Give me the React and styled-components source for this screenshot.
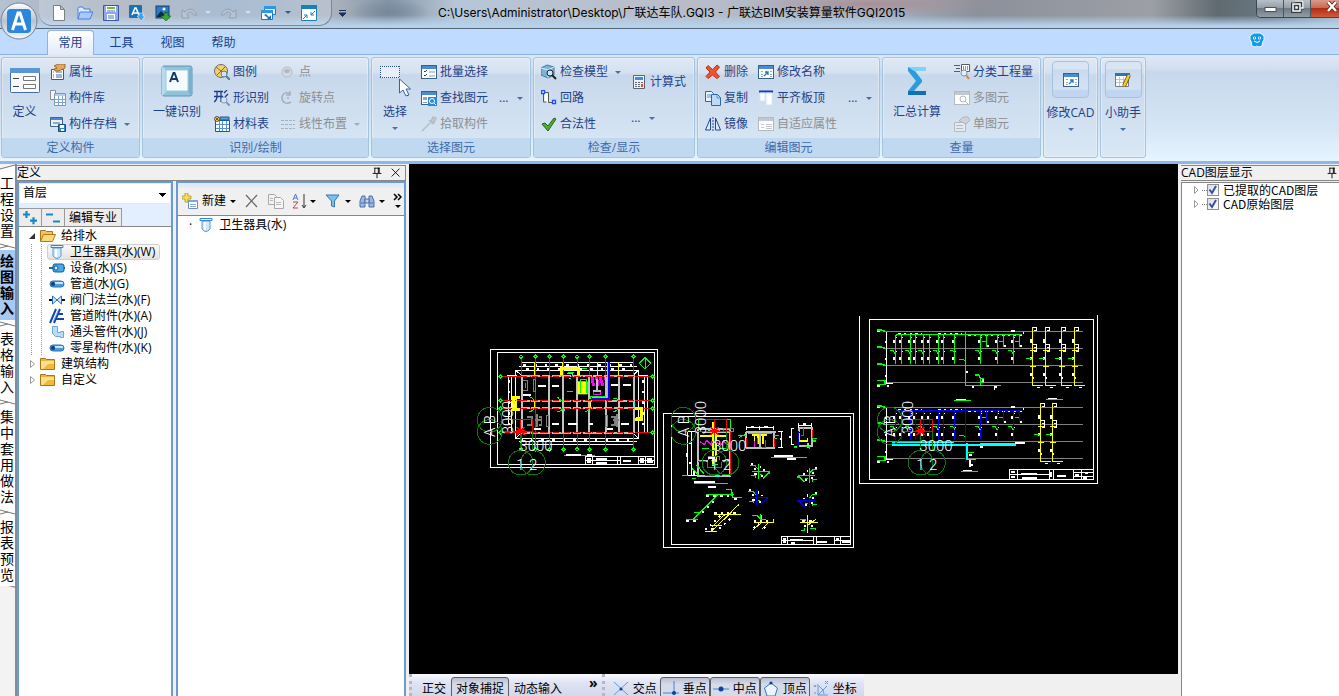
import React from "react";
import styled, { createGlobalStyle } from "styled-components";

const GlobalStyle = createGlobalStyle`
  * {
    box-sizing: border-box;
  }
  body {
    margin: 0;
    overflow: hidden;
    font-family: "Open Sans", "Noto Sans CJK SC", sans-serif;
    font-size: 12px;
    line-height: 16px;
    color: #000;
  }
  button, select, input {
    font: inherit;
    color: inherit;
  }
  button {
    border: 0;
    padding: 0;
    background: none;
    white-space: nowrap;
  }
  ul {
    list-style: none;
    margin: 0;
    padding: 0;
  }
`;

const Window = styled.div`
  display: flex;
  flex-direction: column;
  height: 100vh;
  overflow: hidden;
  background: #f0f0f0;
`;

/* ---------- title bar ---------- */

const TitleBar = styled.header`
  position: relative;
  display: flex;
  justify-content: space-between;
  height: 29px;
  border-bottom: 1px solid #596574;
  background:
    linear-gradient(180deg, rgba(255, 255, 255, 0) 55%, #b5d2ec 92%),
    radial-gradient(ellipse 40px 14px at 390px 12px, #77889b, transparent),
    radial-gradient(ellipse 130px 12px at 870px 4px, #a98f96, transparent),
    linear-gradient(
      90deg,
      #b4c2d2 0%,
      #a3a8b3 10%,
      #8faac6 17%,
      #a9b1bd 25%,
      #8796a8 29%,
      #b6c6d6 34%,
      #b9bdc9 50%,
      #a9b6c5 65%,
      #8b919b 73%,
      #9d9fa6 86%,
      #5f6a70 91%,
      #6a7a86 95%,
      #a4b7ca 100%
    );
`;

const AppButton = styled.button`
  position: absolute;
  z-index: 2;
  left: 0;
  top: 2px;
  width: 38px;
  height: 38px;
`;

const QuickBar = styled.div`
  display: flex;
  align-items: center;
  gap: 10px;
  height: 26px;
  margin-left: 39px;
  padding: 0 14px 0 12px;
  border: 1px solid #7c8897;
  border-top: 0;
  border-radius: 0 0 13px 13px;
  border-left: 0;
  background: rgba(214, 224, 236, 0.35);
`;

const QuickGroup = styled.span`
  display: flex;
  align-items: center;
  gap: 4px;
`;

const QuickSide = styled.div`
  display: flex;
  flex: 0 0 438px;
  align-items: flex-start;
`;

const QuickMore = styled.button`
  display: flex;
  align-items: center;
  height: 26px;
  margin-left: 7px;
`;

const Title = styled.h1`
  flex: 1;
  margin: 0;
  font-family: Inter, "Noto Sans CJK SC", sans-serif;
  font-size: 12px;
  font-weight: 400;
  line-height: 26px;
  white-space: nowrap;
`;

const WindowButtons = styled.div`
  display: flex;
  flex: 0 0 83px;
  height: 18px;
  overflow: hidden;
  border: 1px solid #3e474f;
  border-top: 0;
  border-right: 0;
  border-radius: 0 0 0 5px;
`;

const WindowButton = styled.button`
  flex: 0 0 ${(p) => (p.$close ? "30px" : "27px")};
  height: 17px;
  padding-left: ${(p) => (p.$close ? "12px" : "0")};
  border-right: 1px solid #4b5560;
  background: ${(p) =>
    p.$close
      ? "linear-gradient(#d99a8b, #c66850 48%, #b02e14 50%, #d05a3c)"
      : "linear-gradient(#b9c0c7, #949ca5 48%, #6f7a84 50%, #929ca6)"};
`;

/* ---------- ribbon ---------- */

const TabRow = styled.nav`
  display: flex;
  align-items: flex-end;
  flex: 0 0 26px;
  padding: 0 74px 0 47px;
  border-bottom: 1px solid #8db2e3;
  background: #bfdbff;
`;

const RibbonTab = styled.button`
  width: ${(p) => (p.$active ? "47px" : "51px")};
  height: ${(p) => (p.$active ? "25px" : "24px")};
  margin-right: ${(p) => (p.$active ? "2px" : "0")};
  margin-bottom: -1px;
  padding-bottom: 1px;
  border: 1px solid ${(p) => (p.$active ? "#8db2e3" : "transparent")};
  border-bottom: 0;
  border-radius: 4px 4px 0 0;
  background: ${(p) => (p.$active ? "linear-gradient(#fff, #e1ebf7)" : "none")};
  color: #15428b;
`;

const Mascot = styled.button`
  margin-left: auto;
  height: 25px;
`;

const RibbonBody = styled.div`
  display: flex;
  flex: 0 0 109px;
  align-items: flex-start;
  gap: 2px;
  padding: 2px 1px 0;
  border-bottom: 3px solid #92b5e6;
  background: linear-gradient(#dde8f5, #d4e0f0 12%, #c7d8ed 16%, #d6e6f5 70%, #e6f5ff);
`;

const Group = styled.section`
  display: flex;
  flex-direction: column;
  flex: 0 0 ${(p) => p.$width}px;
  height: 101px;
  overflow: hidden;
  border: 1px solid #a3c3de;
  border-radius: 3px;
  background: linear-gradient(#dfe9f5, #d5e1f0 15%, #c8d8ec 17%, #dae8f5 100%);
  box-shadow: inset 0 0 0 1px rgba(255, 255, 255, 0.35);
`;

const GroupBody = styled.div`
  display: flex;
  flex: 1;
  padding-top: 1px;
  padding-left: ${(p) => (p.$indent ? "4px" : "0")};
`;

const Caption = styled.h2`
  flex: 0 0 19px;
  margin: 0;
  font-size: 12px;
  font-weight: 400;
  line-height: 19px;
  text-align: center;
  background: #c1d8f1;
  color: #3e6aaa;
`;

const Column = styled.div`
  flex: 0 0 ${(p) => (p.$width ? p.$width + "px" : "auto")};
  padding: ${(p) => (p.$pair ? "5px" : "0")} 0 0 3px;
`;

const SmallButton = styled.button`
  display: flex;
  align-items: center;
  gap: 3px;
  height: ${(p) => (p.$tall ? "36px" : "26px")};
  color: ${(p) => (p.disabled ? "#8d8f92" : "#1e4287")};
`;

const MoreButton = styled(SmallButton)`
  gap: 9px;
  margin-top: ${(p) => (p.$tall ? "0" : "26px")};
`;

const LargeButton = styled.button`
  display: flex;
  flex-direction: column;
  align-items: center;
  flex: 0 0 ${(p) => p.$width}px;
  padding-top: 6px;
  line-height: 18px;
  color: #1e4287;
  svg + span {
    margin-top: 6px;
  }
`;

const CollapsedButton = styled(LargeButton)`
  flex: 1;
  padding-top: 2px;
`;

const IconFrame = styled.span`
  display: flex;
  align-items: center;
  justify-content: center;
  width: 37px;
  height: 37px;
  margin-bottom: 6px;
  border: 1px solid #a8c2de;
  border-radius: 4px;
  background: linear-gradient(#d9e5f3 20%, #cadaed 22%, #d3e2f3 78%, #c0d6f0 80%);
`;

const Arrow = styled.span`
  width: 0;
  height: 0;
  margin: ${(p) => (p.$below ? "6px 0 0" : "0 0 0 " + (p.$gap || 0) + "px")};
  border: 3px solid transparent;
  border-top-color: ${(p) => p.$color || "#4d6fa8"};
  border-bottom: 0;
`;

/* ---------- work area ---------- */

const Work = styled.main`
  display: flex;
  flex: 1;
  min-height: 0;
`;

const PageTabs = styled.nav`
  display: flex;
  flex-direction: column;
  flex: 0 0 17px;
  border-right: 2px solid #7f8ea0;
  background: #f4f4f4;
`;

const PageTab = styled.button`
  width: 15px;
  padding: 3px 1px 3px 0;
  font-size: 14px;
  line-height: 16px;
  font-weight: ${(p) => (p.$active ? 700 : 400)};
  white-space: normal;
  word-break: break-all;
  background: ${(p) => (p.$active ? "#a5c9f3" : "#fff")};
`;

const Dock = styled.section`
  display: flex;
  flex-direction: column;
  flex: 0 0 ${(p) => p.$width}px;
  margin-right: ${(p) => (p.$right ? "0" : "3px")};
  margin-left: ${(p) => (p.$right ? "3px" : "0")};
  padding-top: 1px;
  overflow: hidden;
`;

const DockHeader = styled.div`
  display: flex;
  align-items: center;
  flex: 0 0 16px;
  gap: 5px;
  padding-right: 2px;
  border: 1px solid #868686;
  border-left: 0;
  font-size: 12px;
`;

const LayerHeader = styled(DockHeader)`
  padding-right: 0;
  border-right: 0;
`;

const DockTitle = styled.h2`
  flex: 1;
  margin: 0;
  font-size: 12px;
  font-weight: 400;
  line-height: 14px;
  white-space: nowrap;
`;

const IconButton = styled.button`
  display: flex;
  align-items: center;
  gap: ${(p) => p.$gap || 0}px;
`;

const Panes = styled.div`
  display: flex;
  flex: 1;
  gap: 3px;
  min-height: 0;
`;

const Pane = styled.div`
  display: flex;
  flex-direction: column;
  flex: ${(p) => p.$flex || "1"};
  border: 2px solid #6c99d3;
  border-bottom: 0;
  background: #fff;
`;

const LayerPane = styled(Pane)`
  margin-top: 1px;
  border: 1px solid #868686;
  border-width: 1px 0 0 1px;
`;

const FloorSelect = styled.select`
  appearance: none;
  height: 21px;
  padding: 0 4px 1px 3px;
  border: 1px solid #e0ecfa;
  border-radius: 2px;
  background: linear-gradient(#000, #000) no-repeat right 4px top 9px / 7px 1px,
    linear-gradient(#000, #000) no-repeat right 5px top 10px / 5px 1px,
    linear-gradient(#000, #000) no-repeat right 6px top 11px / 3px 1px,
    linear-gradient(#000, #000) no-repeat right 7px top 12px / 1px 1px, #fff;
`;

const TreeTools = styled.div`
  display: flex;
  padding-top: 4px;
  border-bottom: 1px solid #868686;
  background: #e3efff;
`;

const TreeTool = styled.button`
  display: flex;
  align-items: center;
  justify-content: center;
  height: 18px;
  min-width: 23px;
  padding: 1px 4px 0;
  border: 1px solid #9a9a9a;
  border-bottom: 0;
  border-left: 0;
  background: #ececec;
`;

const Tree = styled.ul`
  padding-top: 1px;
`;

const TreeRow = styled.li`
  display: flex;
  align-items: center;
  height: 16px;
  padding-left: ${(p) => (p.$child ? "28px" : "8px")};
  white-space: nowrap;
  background: ${(p) =>
    p.$child
      ? "repeating-linear-gradient(#999 0 1px, transparent 1px 2px) 12px 0 / 1px 100% no-repeat, repeating-linear-gradient(#999 0 1px, transparent 1px 2px) 22px 0 / 1px 100% no-repeat"
      : "none"};
`;

const TreeLabel = styled.span`
  display: flex;
  align-items: center;
  gap: 5px;
  height: 16px;
  padding: 0 4px 0 1px;
  border: 1px solid ${(p) => (p.$selected ? "#cfcfcf" : "transparent")};
  border-radius: 3px;
  background: ${(p) => (p.$selected ? "linear-gradient(#fafafa, #e3e3e3)" : "none")};
`;

const Twisty = styled.svg`
  width: 10px;
  height: 10px;
  margin-right: 1px;
`;

const ComponentTools = styled.div`
  display: flex;
  align-items: center;
  justify-content: space-between;
  height: 33px;
  padding: 4px 2px 0 4px;
  border-bottom: 1px solid #868686;
  background: linear-gradient(#dfebfb 0 4px, #f0f0f0 5px);
`;

const ComponentRow = styled.div`
  display: flex;
  align-items: center;
  gap: 6px;
  height: 18px;
  padding: 0 0 0 11px;
`;

const Stage = styled.div`
  display: flex;
  flex-direction: column;
  flex: 1;
  min-width: 0;
`;

const Viewport = styled.div`
  flex: 1;
  min-height: 0;
  background: #000;
  svg {
    display: block;
  }
`;

const StatusBar = styled.footer`
  display: flex;
  flex: 0 0 22px;
  overflow: hidden;
`;

const StatusGroup = styled.div`
  display: flex;
  padding: 3px 4px 0 5px;
  border-left: 3px dotted #b4b8c4;
  background: linear-gradient(#fafbfe, #dfe3f3 40%, #d3d8ec);
`;

const StatusButton = styled.button`
  display: flex;
  align-items: center;
  gap: 4px;
  height: 24px;
  padding: 0 ${(p) => (p.$snap ? "2px" : "4px")} 1px;
  border: 1px solid ${(p) => (p.$on ? "#5c5f66" : "transparent")};
  border-radius: 3px;
  background: ${(p) => (p.$on ? "linear-gradient(#b9bfcf, #d6dbea 30%)" : "none")};
`;

const StatusMore = styled.button`
  align-self: flex-start;
  margin-left: 22px;
  font-weight: 700;
  font-size: 14px;
  line-height: 12px;
`;

const LayerRow = styled.li`
  display: flex;
  align-items: center;
  height: 14px;
  padding-left: 9px;
  line-height: 14px;
  white-space: nowrap;
  font-family: "Noto Sans CJK SC", sans-serif;
`;

const LayerCheck = styled.input`
  appearance: none;
  width: 12px;
  height: 12px;
  margin: 0 4px 0 0;
  border: 1px solid #8e8f8f;
  background: linear-gradient(135deg, #d5dbe6, #fff);
`;

const LayerLabel = styled.label`
  display: flex;
  align-items: center;
  height: 14px;
  svg {
    margin-left: -15px;
    margin-right: 5px;
    pointer-events: none;
  }
`;

const LayerDots = styled.span`
  width: 5px;
  border-top: 1px dotted #777;
`;

const TabsEnd = styled.div`
  flex: 1;
  background: linear-gradient(15deg, #f3f3f3 98%, #777 99%, #fff);
`;

/* ---------- icons ---------- */

const sheet = (c = "#3b6fb0", bar = "#4d8bd0") => (
  <>
    <rect x="0.5" y="1.5" width="15" height="13" fill="#fff" stroke={c} />
    <rect x="1" y="2" width="14" height="3" fill={bar} />
  </>
);

const magnifier = (x, y, c = "#3a4a5c") => (
  <>
    <path d={`M${x + 2} ${y + 2}l4 4`} stroke={c} strokeWidth="2" />
    <circle cx={x} cy={y} r="3" fill="#cfe4f7" stroke={c} />
  </>
);

const icons = {
  newFile: <path d="M2.500.5h7l4 4v11h-11zM9.500.5v4h4" fill="#fff" stroke="#7d7f85" />,
  open: (
    <>
      <path d="M1 14V3l1-1h4l1 2h6v3" fill="#dcebff" stroke="#4a7fe0" />
      <path d="M1 14l2-7h13l-3 7z" fill="#a9c8ff" stroke="#4a7fe0" />
    </>
  ),
  save: (
    <>
      <path d="M.5.5h15v15h-15z" fill="#8ea9e6" stroke="#3c56a6" />
      <path d="M3 1h10v6H3zM4 9h8v6H4z" fill="#fff" />
      <path d="M4 2h8v2H4z" fill="#77b548" />
      <path d="M4 6h8M5 11h6M5 13h6" stroke="#5372b8" />
    </>
  ),
  letterDown: (
    <>
      <rect width="13" height="13" rx="1" fill="#1574b8" />
      <path d="M3 10l3-7h1l3 7M4.500 8h4" stroke="#fff" strokeWidth="1.600" fill="none" />
      <path d="M10 8v3H8l4 5 4-5h-2V8z" fill="#3ba0ee" stroke="#fff" strokeWidth=".5" />
    </>
  ),
  pictureDown: (
    <>
      <rect x="1" y="1" width="13" height="12" fill="#2a7ac2" stroke="#143f70" />
      <path d="M2 11l4-5 3 3 2-2 2 3v2H2z" fill="#0d2847" />
      <circle cx="9" cy="4" r="1.500" fill="#fff" />
      <path d="M9 8h4v3h3l-5 5-5-5h3z" fill="#3ba52d" stroke="#1c6a17" strokeWidth=".6" />
    </>
  ),
  undo: <path d="M1 13V5l3 2c4-5 10-3 12 3h-3c-2-4-5-4-7-1l2 4z" fill="#b8c4d0" stroke="#93a1b0" />,
  redo: <path d="M15 13V5l-3 2C8 2 2 4 0 10h3c2-4 5-4 7-1l-2 4z" fill="#b8c4d0" stroke="#93a1b0" />,
  switchWindow: (
    <>
      <path d="M3.500 1.500h11v8h-11z" fill="#dff0ff" stroke="#1a78c8" />
      <path d="M3 1h12v3H3z" fill="#2f96e6" />
      <path d="M.5 5.500h11v9H.5z" fill="#fff" stroke="#1a78c8" />
      <path d="M0 5h12v3H0z" fill="#2f96e6" />
      <path d="M3 10l2-1 3 3 2-2v5H5l2-2z" fill="#2172c2" />
    </>
  ),
  zoomWindow: (
    <>
      <path d="M.5.5h15v15H.5z" fill="#fff" stroke="#1b7eaf" />
      <path d="M0 0h16v4H0z" fill="#1482b8" />
      <path d="M14 6l-4 4M10 7v3h3M2 14l4-4M3 10h3v3" stroke="#1482b8" fill="none" />
    </>
  ),
  props: (
    <>
      <path d="M1.500 5.500h12v10h-12z" fill="#fff" stroke="#2f5c98" />
      <path d="M3 8h1m2 0h6M3 11h1m2 0h6M3 13h1m2 0h6" stroke="#416ca8" />
      <path d="M4 2l4-2h7v4l-4 2-3 1H5l-1-2 3-1z" fill="#e3a65b" stroke="#8e5920" strokeWidth=".8" />
    </>
  ),
  library: (
    <>
      <path d="M.5.5h5v9h-5z" fill="#f5f5f5" stroke="#8c8c8c" />
      <path d="M4.500 3.500h11v12h-11z" fill="#fff" stroke="#7f98b5" />
      <path d="M5 4h10v2H5z" fill="#b6cde6" />
      <path d="M5 9.500h10M5 12.500h10M8.500 6v9M12.500 6v9" stroke="#7ba3d4" />
    </>
  ),
  archive: (
    <>
      <path d="M.5 1.500h12v9H.5z" fill="#e8f1fb" stroke="#42658e" />
      <path d="M1 2h11v2H1z" fill="#4f86c4" />
      <path d="M3 7h7" stroke="#42658e" />
      <path d="M8.500 8.500h7v7h-7z" fill="#3686c4" stroke="#174c80" />
      <path d="M10 9h4v3h-4zM11 13h3v2h-3z" fill="#fff" />
    </>
  ),
  legend: (
    <>
      <circle cx="7" cy="7" r="6.500" fill="#f6cf69" stroke="#6c6c70" />
      <path d="M2 3l10 8M3 11l8-8" stroke="#6c6c70" />
      {magnifier(10, 10, "#5a7898")}
    </>
  ),
  shape: (
    <>
      <path d="M0 1.500h9M0 6.500h9M3 2v4c0 3-1 5-3 6M7 2v10M13 0l-3 3M14 4l-3 3" stroke="#1e3c8a" strokeWidth="1.300" fill="none" />
      {magnifier(10, 10, "#8a9aac")}
    </>
  ),
  material: (
    <>
      <path d="M1.500 4.500h14v11h-14z" fill="#fff" stroke="#1f5796" />
      <path d="M6 1h9v3H6z" fill="#5aa2dd" stroke="#1f5796" />
      <path d="M2 8.500h13M2 12.500h13M5.500 5v10M8.500 5v10M12.500 5v10" stroke="#5c93cf" />
      <circle cx="3" cy="3" r="2.500" fill="#f2d374" stroke="#6a5a2a" />
      <path d="M1 1l4 4M5 1l-4 4" stroke="#6a5a2a" />
    </>
  ),
  point: (
    <>
      <circle cx="7" cy="8" r="5" fill="#d6dbe2" stroke="#b4bbc5" />
      <ellipse cx="7" cy="7" rx="3" ry="2" fill="#b0b8c2" />
    </>
  ),
  rotate: (
    <path d="M10 4C6 1 2 4 2 8s4 7 9 4M10 1v4H6M7 8h2" stroke="#a9b0ba" strokeWidth="1.600" fill="none" />
  ),
  linear: <path d="M1 4.500h14M1 8.500h14M1 12.500h14" stroke="#a9b0ba" strokeDasharray="3 1" />,
  batch: (
    <>
      {sheet("#35618f")}
      <path d="M3 7l1 1 2-2M3 11l1 1 2-2" stroke="#23466f" fill="none" />
      <path d="M8 8h6M8 12h6" stroke="#8c98a6" />
    </>
  ),
  find: (
    <>
      {sheet("#35618f")}
      <path d="M2 7h4v3H2zM2 12h4v1H2zM9 7h4v2H9z" fill="#8fa3ba" />
      <rect x="7" y="7" width="9" height="9" fill="#2a88d6" />
      <circle cx="11" cy="11" r="2.500" fill="none" stroke="#fff" />
      <path d="M13 13l2 2" stroke="#fff" />
    </>
  ),
  dropper: <path d="M1 15l8-8M8 4l4 4M10 5l2-4 3 1-2 5z" stroke="#b3b9c0" fill="#c4c9cf" strokeWidth="1.300" />,
  model: (
    <>
      <path d="M0 4l6-3 7 2v8l-6 3-7-3z" fill="#7fb3d8" stroke="#41789f" />
      <path d="M0 4l7 2 6-3M7 6v8" stroke="#d6ecfa" fill="none" />
      {magnifier(9, 9, "#222")}
    </>
  ),
  circuit: (
    <>
      <path d="M3.500 3.500h4v9h-4z" fill="#fff" />
      <path d="M3.500 2.500h4v10h5M2.500 3v9h3" stroke="#555" fill="none" />
      <path d="M.5.5h3v3h-3zM11.500 10.500h3v3h-3z" fill="#fff" stroke="#1d4ef0" strokeWidth="1.300" />
    </>
  ),
  check: <path d="M1 8l3-1 3 3 6-8 2 1-8 12z" fill="#4bae2f" stroke="#23661a" />,
  calc: (
    <>
      <path d="M2.500 1.500h11v13h-11z" fill="#eef1f5" stroke="#5a6472" />
      <path d="M4 3h8v3H4z" fill="#3c8fe0" />
      <path d="M4 8.500h2m1 0h2m1 0h2M4 10.500h2m1 0h2M4 12.500h2m1 0h2" stroke="#5a6472" />
      <path d="M10 10h2v3h-2z" fill="#e24b31" />
    </>
  ),
  remove: (
    <path d="M1 4l2-2.500 4.500 4L12 1l2.500 2-4 5 4 4.500-2.500 2L7.500 11 3 14.500l-2-2L5 8z" fill="#f0532f" stroke="#b8321a" />
  ),
  copy: (
    <>
      <path d="M.5 1.500h6l2 2v8h-8z" fill="#e8f3ff" stroke="#2768a8" />
      <path d="M6.500 4.500h6l3 3v8h-9z" fill="#bcd9f5" stroke="#2768a8" />
      <path d="M12 5v3h3M2 5h4M2 7h4" stroke="#5a90c8" />
    </>
  ),
  mirror: (
    <>
      <path d="M5.500 2v12H.5zM10.500 2v12h5z" fill="#dcecff" stroke="#1f478c" />
      <path d="M8 1v14" stroke="#1f478c" strokeDasharray="2 1" />
    </>
  ),
  rename: (
    <>
      {sheet("#35618f")}
      <path d="M3 7.500h2M3 10.500h2M3 12.500h2M12 7.500h2M12 10.500h2M12 12.500h2" stroke="#9aa6b4" />
      <path d="M6 12l4-4M7 8h3v3" stroke="#2277cc" strokeWidth="1.300" fill="none" />
    </>
  ),
  alignTop: (
    <>
      <path d="M1 1.500h14" stroke="#1238c0" strokeWidth="2" />
      <path d="M2 3h5v8H2zM8 3h6v12H8z" fill="#fff" stroke="#d2e6f5" />
    </>
  ),
  adaptive: (
    <>
      {sheet("#b5bac2", "#c3c8cf")}
      <path d="M3 8.500h3M3 11.500h3M8 8.500h6M8 10.500h6M8 12.500h6" stroke="#c2c7ce" />
    </>
  ),
  classify: (
    <>
      <path d="M0 1.500h6M2 4.500h4M0 7.500h6" stroke="#555d68" />
      <path d="M7.500.5h8v7h-8z" fill="#fff" stroke="#555d68" />
      <path d="M9 3h1m1 0h1m1 0h1M9 5h1m1 0h1m1 0h1" stroke="#333" />
      <path d="M12 11l3 4" stroke="#d08a2c" strokeWidth="2" />
      <circle cx="10" cy="9" r="3" fill="#e2effb" stroke="#8392a4" />
    </>
  ),
  multi: (
    <>
      {sheet("#b5bac2", "#c3c8cf")}
      <circle cx="9" cy="9" r="3" fill="none" stroke="#b0b5bd" />
      <path d="M11 11l3 3" stroke="#b0b5bd" />
    </>
  ),
  single: (
    <>
      <path d="M.5 6.500h11v9H.5z" fill="#e6e9ed" stroke="#b5bac2" />
      <path d="M2 9.500h7M2 12.500h7" stroke="#b5bac2" />
      <path d="M5 5l4-4h5l2 3-4 4z" fill="#cdd2d8" stroke="#b0b5bd" />
    </>
  ),
  helper: (
    <>
      <path d="M.5 1.500h13v13H.5z" fill="#fff" stroke="#7b7b7b" />
      <path d="M0 1h15v3H0z" fill="#2c74b4" />
      <path d="M1 7.500h12M1 10.500h12M4.500 5v9M8.500 5v9" stroke="#bfc6cf" />
      <path d="M14 3L9 14" stroke="#5c4a10" strokeWidth="4" />
      <path d="M14 3L9 14" stroke="#f4ca32" strokeWidth="2.500" />
    </>
  ),
  folder: (
    <>
      <path d="M.5 13.500v-11h5l1 1h8v10z" fill="#e9b645" stroke="#a9741a" />
      <path d="M1 5h13v8H1z" fill="#fbe08a" />
      <path d="M8 8h6v5H3z" fill="#f0b93c" />
    </>
  ),
  folderOpen: (
    <>
      <path d="M.5 13.500v-11h5l1 1h6v3" fill="#f0c463" stroke="#a9741a" />
      <path d="M.5 13.500l3-7h12l-3 7z" fill="#fbd979" stroke="#b07c1f" />
    </>
  ),
  basin: (
    <>
      <path d="M4 4v8q4 5 8 0V4z" fill="#cfe8fa" stroke="#5b9bd0" />
      <path d="M2 1.500h12v2H2z" fill="#e9f5ff" stroke="#3d84c8" />
      <path d="M7 5v8" stroke="#fff" strokeWidth="2" />
    </>
  ),
  device: (
    <>
      <path d="M0 8h16" stroke="#1c6cb0" strokeWidth="2" />
      <rect x="4" y="4" width="11" height="8" rx="2" fill="#47a9e8" stroke="#11599b" />
      <circle cx="7" cy="8" r="2" fill="#d8f1ff" stroke="#11599b" />
    </>
  ),
  pipe: (
    <>
      <rect x="1" y="5" width="14" height="6" rx="3" fill="#4a98dd" stroke="#2b74bd" />
      <path d="M6 7h8" stroke="#c8e7ff" strokeWidth="2" />
      <circle cx="4" cy="8" r="2" fill="#173f75" />
    </>
  ),
  valve: (
    <>
      <path d="M0 8h3M13 8h3" stroke="#111" strokeWidth="2" />
      <path d="M3.500 4v8L8 8l4.500 4V4L8 8z" fill="#d5ebff" stroke="#2270bd" />
    </>
  ),
  fitting: (
    <>
      <path d="M1 15L7 1M5 15l6-14M8 6h6M6 11h9" stroke="#1446b0" strokeWidth="2" />
      <path d="M4 14L9 3" stroke="#6ab4ff" />
    </>
  ),
  elbow: (
    <path d="M3.500 2.500h5v6h3v-1h3v6h-3v-1h-5l-3-3z" fill="#b9dcf8" stroke="#6aa8dc" strokeLinejoin="round" />
  ),
  plusPlus: <path d="M4 0v8M0 4h8M12 7v8M8 11h8" stroke="#1888c8" strokeWidth="2.500" />,
  minusMinus: <path d="M0 4h8M8 12h8" stroke="#1888c8" strokeWidth="2.500" />,
  newItem: (
    <>
      <path d="M6.500 7.500h9v8h-9z" fill="#fff" stroke="#6f8fc2" />
      <path d="M6 7h10v2H6z" fill="#7aa4e4" />
      <path d="M8 11.500h6M8 13.500h6" stroke="#8fb0e2" />
      <path d="M3 0h3v3h3v3H6v3H3V6H0V3h3z" fill="#f8dd55" stroke="#a98b22" strokeWidth=".7" />
    </>
  ),
  cross: <path d="M2 2l11 12M13 2L2 14" stroke="#6b6b6b" strokeWidth="1.300" />,
  copyGray: (
    <>
      <path d="M.5 1.500h6l2 2v8h-8z" fill="#f2f2f2" stroke="#a8a8a8" />
      <path d="M6.500 4.500h6l3 3v8h-9z" fill="#f6f6f6" stroke="#a8a8a8" />
      <path d="M8 9.500h5M8 11.500h5M2 5.500h3M2 7.500h3" stroke="#b8b8b8" />
    </>
  ),
  sort: (
    <>
      <path d="M1 7l2.500-6L6 7M2 5h3" stroke="#5577c0" fill="none" />
      <path d="M1 9h5l-5 6h5" stroke="#b04a52" fill="none" />
      <path d="M12 1v13M10 12l2 3 2-3" stroke="#333" fill="none" />
    </>
  ),
  filter: <path d="M1 2h13L9.500 8v6l-3-1V8z" fill="#7cc0ee" stroke="#3579b5" />,
  binoculars: (
    <>
      <path d="M1 14V8l2-5h3v11zM15 14V8l-2-5h-3v11z" fill="#9db8e0" stroke="#4c6da6" />
      <path d="M6 6h4v4H6zM2 10h3M11 10h3" fill="#c1d3ef" stroke="#4c6da6" />
    </>
  ),
  crossPoint: (
    <>
      <path d="M1 1l14 13M15 1L1 14" stroke="#5a9ae0" />
      <circle cx="8" cy="8" r="1.500" fill="#123f96" />
    </>
  ),
  perpendicular: (
    <>
      <path d="M0 12h16M11 0v12" stroke="#3f86dc" />
      <circle cx="11" cy="12" r="2" fill="#123f96" />
    </>
  ),
  midpoint: (
    <>
      <path d="M0 8h16" stroke="#3f86dc" />
      <circle cx="8" cy="8" r="2.500" fill="#123f96" />
    </>
  ),
  vertex: (
    <>
      <path d="M8 2l6.500 5-2.500 8H4L1.500 7z" fill="#eef5ff" stroke="#2f74cf" />
      <circle cx="8" cy="2" r="1.600" fill="#123f96" />
    </>
  ),
  coord: (
    <>
      <path d="M5 3v11h10M5 14l9-9M6 5l4 4 1 4" stroke="#5a9ae0" fill="none" />
      <path d="M1 4l1 2 1-2M12 0l3 3M15 0l-3 3M1 12h2" stroke="#8890a5" fill="none" />
    </>
  ),
  close: <path d="M3 3l9 9M12 3l-9 9" stroke="#000" />,
  pin: <path d="M5 2.500h6M5.500 2v6M9.500 2v6M10.500 2v6M3 8.500h10M8 9v5" stroke="#000" fill="none" />,
};

const Icon = ({ name, size = 16 }) => (
  <svg width={size} height={size} viewBox="0 0 16 16" fill="none" aria-hidden="true">
    {icons[name]}
  </svg>
);

const bigIcons = {
  define: (
    <>
      <rect x="1.500" y="3.500" width="29" height="24" rx="1" fill="#f6faff" stroke="#3f6fa6" />
      <path d="M1 3h30v5H1z" fill="#5b95d5" />
      <path d="M4 13.500h6M4 21.500h6" stroke="#444" />
      <path d="M14.500 11.500h12v4h-12zM14.500 19.500h12v4h-12z" fill="#fff" stroke="#777" />
    </>
  ),
  recognise: (
    <>
      <rect x="1" y="1" width="30" height="30" rx="2" fill="#8fc2dc" stroke="#5d97b5" />
      <path d="M1 1l5 5v20l-5 5z" fill="#b5dcee" />
      <path d="M31 1l-5 5v20l5 5z" fill="#79b1cd" />
      <rect x="5" y="5" width="22" height="21" fill="#f4fbff" stroke="#9cc8de" />
      <path d="M9 17l3.500-9h1l3.500 9M10.500 14h5" stroke="#153a66" strokeWidth="2" fill="none" />
    </>
  ),
  select: (
    <>
      <rect x="1" y="1" width="20" height="12" fill="#e8effb" />
      <path d="M1 1.500h20M1 12.500h20M1.500 1v12M20.500 1v12" stroke="#27508f" strokeDasharray="1 1" shapeRendering="crispEdges" />
      <path d="M20.500 14v14l3.500-3 3 6 3-1-3-6h4.500z" fill="#fff" stroke="#35629f" />
    </>
  ),
  sigma: (
    <>
      <path d="M7 2h18v4H14l7 9v2l-8 9h12v4H7v-4l8-10-8-10z" fill="#2a9ddd" />
      <path d="M7 2h18v4H13z" fill="#7fd3f7" />
      <path d="M7 26h18v4H7z" fill="#116fb4" />
    </>
  ),
};

const BigIcon = ({ name }) => (
  <svg width="32" height="32" viewBox="0 0 32 32" fill="none" overflow="visible" aria-hidden="true">
    {bigIcons[name]}
  </svg>
);

/* ---------- ribbon data ---------- */

const groups = [
  {
    caption: "定义构件",
    width: 139,
    large: { icon: "define", text: "定义", width: 45 },
    columns: [
      {
        items: [
          { icon: "props", text: "属性" },
          { icon: "library", text: "构件库" },
          { icon: "archive", text: "构件存档", arrow: true },
        ],
      },
    ],
  },
  {
    caption: "识别/绘制",
    width: 227,
    large: { icon: "recognise", text: "一键识别", width: 68 },
    columns: [
      {
        width: 66,
        items: [
          { icon: "legend", text: "图例" },
          { icon: "shape", text: "形识别" },
          { icon: "material", text: "材料表" },
        ],
      },
      {
        items: [
          { icon: "point", text: "点", disabled: true },
          { icon: "rotate", text: "旋转点", disabled: true },
          { icon: "linear", text: "线性布置", disabled: true, arrow: true },
        ],
      },
    ],
  },
  {
    caption: "选择图元",
    width: 160,
    large: { icon: "select", text: "选择", width: 46, arrow: true },
    columns: [
      {
        width: 78,
        items: [
          { icon: "batch", text: "批量选择" },
          { icon: "find", text: "查找图元" },
          { icon: "dropper", text: "拾取构件", disabled: true },
        ],
      },
    ],
    more: true,
  },
  {
    caption: "检查/显示",
    width: 162,
    columns: [
      {
        width: 90,
        items: [
          { icon: "model", text: "检查模型", arrow: true },
          { icon: "circuit", text: "回路" },
          { icon: "check", text: "合法性" },
        ],
      },
      { pair: true, items: [{ icon: "calc", text: "计算式" }, { more: true }] },
    ],
  },
  {
    caption: "编辑图元",
    width: 183,
    columns: [
      {
        width: 53,
        items: [
          { icon: "remove", text: "删除" },
          { icon: "copy", text: "复制" },
          { icon: "mirror", text: "镜像" },
        ],
      },
      {
        width: 90,
        items: [
          { icon: "rename", text: "修改名称" },
          { icon: "alignTop", text: "平齐板顶" },
          { icon: "adaptive", text: "自适应属性", disabled: true },
        ],
      },
    ],
    more: true,
  },
  {
    caption: "查量",
    width: 159,
    large: { icon: "sigma", text: "汇总计算", width: 68 },
    columns: [
      {
        items: [
          { icon: "classify", text: "分类工程量" },
          { icon: "multi", text: "多图元", disabled: true },
          { icon: "single", text: "单图元", disabled: true },
        ],
      },
    ],
  },
];

const collapsedGroups = [
  { icon: "rename", text: "修改CAD", width: 55 },
  { icon: "helper", text: "小助手", width: 46 },
];

const RibbonGroup = ({ group }) => (
  <Group $width={group.width}>
    <GroupBody $indent={!group.large}>
      {group.large && (
        <LargeButton $width={group.large.width}>
          <BigIcon name={group.large.icon} />
          <span>{group.large.text}</span>
          {group.large.arrow && <Arrow $below />}
        </LargeButton>
      )}
      {group.columns.map((column, i) => (
        <Column key={i} $width={column.width} $pair={column.pair}>
          {column.items.map((item, j) =>
            item.more ? (
              <MoreButton key={j} $tall>
                ...
                <Arrow />
              </MoreButton>
            ) : (
              <SmallButton key={j} disabled={item.disabled} $tall={column.pair}>
                <Icon name={item.icon} />
                {item.text}
                {item.arrow && <Arrow $gap={4} $color={item.disabled && "#a5a9af"} />}
              </SmallButton>
            )
          )}
        </Column>
      ))}
      {group.more && (
        <Column>
          <MoreButton>
            ...
            <Arrow />
          </MoreButton>
        </Column>
      )}
    </GroupBody>
    <Caption>{group.caption}</Caption>
  </Group>
);

/* ---------- drawings ---------- */

const G = "#00ff00";
const Y = "#ffff00";
const W = "#fff";
const R = "#ff0000";
const B = "#0000ff";
const C = "#00ffff";
const M = "#ff00ff";
const S = "#c0c0c0";

const Line = ({ d, c = W, w = 3, dash }) => (
  <path d={d} stroke={c} strokeWidth={w} strokeDasharray={dash} fill="none" shapeRendering="crispEdges" />
);

const each = (list, fn) => list.map(fn).join("");

// axis marker with its origin at the red star, units are a third of a pixel
const AxisMark = ({ x, y }) => (
  <g transform={`translate(${x} ${y})`}>
    <g fill="none" stroke="#008000" strokeWidth="3" shapeRendering="crispEdges">
      <circle cx="-93" cy="-34" r="37" />
      <circle cx="-93" cy="3" r="37" />
      <circle cx="0" cy="95" r="37" />
      <circle cx="37" cy="95" r="37" />
      <path d="M-55 -35H36M-55 1H0M0 0V58M36 0V58" />
    </g>
    <g fill="#fff" fontFamily="Roboto, sans-serif" fontWeight="300" fontSize="45">
      <text x="-4" y="60">3000</text>
      <text x="-13" y="116">1</text>
      <text x="25" y="116">2</text>
      <text transform="translate(-24 10) rotate(-90)">3000</text>
      <text transform="translate(-77 18) rotate(-90)">A</text>
      <text transform="translate(-77 -20) rotate(-90)">B</text>
    </g>
    <Line c={R} d="M0 0V-35H36V0H0" />
    <Line c={R} w={4} d="M-14 0H14M0-14V14M-12-12L12 12M12-12L-12 12" />
  </g>
);

const axisX = [153, 196, 238, 280, 321, 358, 406, 490];
const axisY = [109, 181, 205, 277];

const diamond = (x, y) => `M${x - 5} ${y}l5-5l5 5l-5 5z`;

const FloorPlan = () => (
  <svg x="61" y="176" width="200" height="145" viewBox="0 0 600 435" overflow="visible">
    <Line d="M61.500 28.500H562.500V382.500H61.500zM82.500 37.500H553.500V373.500H82.500z" />
    <Line d="M346.500 373V349.500H553M346 361.500H452M367.500 349V373M442.500 349V373M451.500 349V373M505.500 349V373M505 361.500H553M526.500 349V373" />
    <Line w={6} d="M352 357H362M352 367H362M378 357H410M378 369H410M458 363H482M510 357H522M530 357H546M510 367H522M532 367H550" />
    <Line d="M155 67.500H491M147 78.500H500M136 90.500H505M136 295.500H505M147 303.500H500M155 313.500H491" />
    <Line d="M115.500 109V250M123.500 105V277M136.500 90V296M505.500 90V296M523.500 105V277M532.500 109V277M136 90L153 105M505 90L490 105M136 295L153 280M505 295L490 280M110 105H140M110 277H140M505 105H535M505 277H535" />
    <Line w={6} dash="8 24" d="M160 75H485M168 88H490M150 299H490M118 120V270M520 120V270" />
    <Line c={Y} d="M193.500 67V105M277.500 67V85M382.500 67V105M446.500 67V105M193.500 180V208M277.500 180V205M361.500 180V205M446.500 180V205" />
    <Line c={R} d={each(axisX, (x) => `M${x + 1} 55V325`) + each(axisY, (y) => `M95 ${y}H543`)} />
    <Line c={S} w={6} d={each([156, 237, 280, 321, 358, 408, 447, 491], (x) => `M${x} 104V280`)} />
    <Line c={S} w={6} dash="26 5" d="M153 107H494M153 183H370M415 183H494M153 205H494M153 280H494" />
    <Line c={R} dash="18 14" d="M153 109H494M153 181H494M153 205H494M153 277H494" />
    <Line c={C} dash="30 50" d="M170 106.500H490M190 280.500H494" />
    <Line
      c={G}
      d={
        each(axisX, (x) => diamond(x, 50) + diamond(x, 328)) +
        each(axisY, (y) => diamond(91, y) + diamond(547, y))
      }
    />
    <Line c={G} d="M508 70L525 53L542 70L525 87zM525 52V87M282 346.500H375M335 86H350M295 96H312M292 155H308" />
    <Line c={G} d="M262 170Q270 182 278 182M178 170Q190 175 192 182M178 214Q190 214 192 205M262 214Q275 214 278 205M345 214Q356 214 358 205M430 175Q442 172 444 182M430 214Q442 214 444 205" />
    <Line c={Y} w={9} d="M275 105V86H325V104M150 173H129V207H150M494 206H514V237H494" />
    <Line c={Y} d="M138 176V205M497 231.500H514" />
    <rect x="323" y="124" width="30" height="39" fill={Y} />
    <Line c={G} d="M331.500 160V118.500H349.500V160" />
    <Line c={C} w={4} d="M290 100H308V108M296 115H304M282 213V208M494 187V198" />
    <Line c={C} d="M412.500 66V172.500H366" />
    <Line c={B} d="M418.500 66V178.500H358M415.500 66V175.500H362" />
    <Line c={G} d="M362 169.500H409M361.500 169V178" />
    <Line c={M} w={9} dash="9 4" d="M362 115H405M364 124H400M366 132H402" />
    <Line c={M} d="M371 155V162.500H391V155" />
    <Line c={S} w={6} d="M382 116V152M368 153H394" />
    <Line c="#808080" d="M160 122H172V150H160M166 128V144M190 118V154H195V118zM230 225V260H236V225zM405 225V260H411V225z" />
    <Line c="#808080" w={5} d="M172 230H186V255H172M200 222V260M206 230H214V255H206M424 230H434V255H424M440 222V260M196 240H212M430 240H446" />
    <Line w={6} d="M204 137H228M246 137H266M422 134H444M458 134H482M160 165H182M246 252H266M294 252H320M356 252H370M454 252H478M192 267H212M412 267H428M288 344H332M350 346H366" />
    <AxisMark x={152} y={273} />
  </svg>
);

const Riser = ({ x, y, c, flip }) => (
  <g transform={`translate(${x} ${y}) scale(${flip ? -1 : 1} 1)`}>
    <Line c={c} w={4} d="M0-22V22M-18 0H34M34 0L14 20M34 0V6" />
    <Line c={G} d="M-24-18H-10L0-6M-22 12H-8V18M4 8H12" />
    <Line w={5} d="M6-18V-10M-14-8H-8M16-8V-3M-12 7H-5M8 14H14M-22-22H-16" />
  </g>
);

const DetailSheet = () => (
  <svg x="246" y="231" width="210" height="160" viewBox="0 0 630 480" overflow="visible">
    <Line d="M25.500 55.500H595.500V457.500H25.500zM49.500 64.500H586.500V448.500H49.500z" />
    <Line d="M379.500 448V424.500H586M379 436.500H478M397.500 424V448M475.500 424V448M484.500 424V448M538.500 424V448M538 436.500H586M556.500 424V448" />
    <Line w={6} d="M384 431H392M384 442H392M404 435H444M408 444H420M486 441H516M542 431H552M560 441H584" />
    <Line d="M97.500 108V242M109.500 108V242M90 108.500H125M90 242.500H125" />
    <Line w={6} d="M96 175V185M106 140V146M106 200V206" />
    <Line c={S} w={6} d="M130 102V242H226V102H130M130 199H160M200 199H226M140 110H222" />
    <Line c={R} d="M130 199H154M200 199H226M226.500 110V242M150 241.500H200" />
    <Line c={C} w={5} d="M160 104H196M180 243H196" />
    <Line c={Y} w={5} d="M136 122H214M173 82V212M182 110V200" />
    <Line c={M} w={4} d="M134 140L148 148L156 136L168 150L172 138M184 140L196 150L206 138L218 150M157 200V217H200V200" />
    <Line c={G} w={4} d="M131 98V74H226V82M140 160H162M192 160H214M170 208H188M82 242H100M112 220L130 240M112 250H122M124 210L148 236M116 264.500H220M226 72V104" />
    <Line c="#808080" d="M161 195V183H194V195M206 100H236V110H206z" />
    <Line w={6} d="M160 190H180M116 262H180M158 276H184M118 228V240" />

    <Line d="M274 97.500H356M274.500 92V104M313.500 92V104M356.500 92V104M379.500 109V157M368 109.500H384M368 157.500H384" />
    <Line w={6} d="M288 95H298M328 95H340M378 128V136" />
    <Line c={S} w={6} d="M272 112H364M314 112V160M272 158H360M274 112V160M358 112V160" />
    <Line c={G} d="M278 115.500H350M250 122H272M252 128L270 118M358 122H372M356 130H366" />
    <Line c={R} d="M274.500 128V156M358.500 128V156" />
    <Line c={Y} w={5} d="M290 120H308V146M298 122V138M318 120H336M324 120V148" />
    <Line c={M} d="M298 138V156M306 130V148M332 136V156H322" />
    <Line c={G} w={4} d="M348 187H456" />
    <Line w={6} d="M358 183H414M396 191H422" />

    <Line d="M430 91.500H470M430.500 84V98M470.500 84V98M409.500 100V148M409 100.500H418M409 148.500H418" />
    <Line w={6} d="M444 88H454M406 122V130" />
    <Line c={S} w={6} d="M432 98H470V152H432M432 98V112M458 144V160" />
    <Line c={B} d="M431.500 108V150" />
    <Line c={R} d="M472.500 106V130" />
    <Line c={M} d="M446 100V122H438" />
    <Line c={Y} w={4} d="M434 114V138H458V128M436 140H450" />
    <Line c={G} w={4} d="M472 130H486M474 138H482M416 156H426M450 154H464V162" />

    <Riser x={310} y={230} c={G} />
    <Riser x={304} y={307} c={B} />
    <Riser x={463} y={242} c={G} flip />
    <Riser x={463} y={316} c={B} flip />

    <Line c={G} d="M154 298.500H238M188 299L116 372M92 373.500H128M116 352H138L146 342M214 282H228L232 308H260M232 292V310" />
    <Line w={6} dash="7 14" d="M154 303H222M176 318L134 360M94 377H124M238 312H252" />
    <Line c={Y} d="M252 328L168 410M178 358.500H258M232 350L206 376M208 360L172 394M150 408.500H186M170 390H200" />
    <Line w={6} dash="7 12" d="M178 353H256M150 403H184M226 372L184 408M196 362L166 392" />
    <Line c={Y} d="M296 382.500H356M356 372V384M318 384L294 404M338 384L322 402M318 360V384" />
    <Line c={G} d="M292 362H306L316 372H334M316 358V372" />
    <Line w={6} dash="7 11" d="M296 377H352M296 400L312 386M326 400L340 388" />
    <Line c={Y} d="M457.500 360V414M436 382.500H488M460 390L484 372" />
    <Line c={G} d="M436 372H450V378M438 406H448V398M466 400H480V406" />
    <Line w={6} dash="7 14" d="M442 377H484M446 392H474" />
    <AxisMark x={178} y={108} />
  </svg>
);

const risers = [121, 139, 166, 181, 205, 223, 250, 265];

const RiserBlock = ({ y, c }) => (
  <g transform={`translate(0 ${y})`}>
    <Line c="#808080" d="M88 64.500H684M88 115.500H684M88 166.500H684M88 217.500H684" />
    <Line d="M94.500 66V220M88 220.500H114" />
    <Line w={6} dash="7 44" d="M92 92V220" />
    <Line c={G} w={4} d="M66 60H78L90 64M66 111H78L90 115M66 162H78L90 166M66 212H90V224H66" />
    <Line w={5} d="M66 64H76M66 228H76M96 228H102" />
    <Line w={4} d={each([...risers, 298, 376, 427, 475], (x) => `M${x - 4} 90V98M${x + 4} 80V85M${x - 4} 142V150M${x + 4} 122V127`)} />
    <Line w={4} dash="7 10" d="M130 70H200M250 70H320M340 75H510" />
    <Line
      c={c}
      w={4}
      d={
        "M121 76L130 73H500" +
        each(risers, (x) => `M${x} 74V163`) +
        "M298 76V163M331 66V226M376 74V163M427 74V163M475 74V163M394 76V112M445 76V112M493 76V112"
      }
    />
    <Line c={G} d={each([121, 166, 205, 250, 300, 376, 427, 475], (x) => `M${x - 16} 122H${x - 6}L${x} 132`) + "M312 148H326L331 154M380 94H392M431 94H443M480 94H491"} />
    <Line w={5} d="M468 62H480M398 104V110M449 104V110M497 104V110M336 182V190M505 66V72" />
  </g>
);

const Stack = ({ x, y, foot = 170 }) => (
  <g transform={`translate(${x} ${y})`}>
    <Line d="M0 1.500H14V10H6M0 52.500H14V60H6M14 60V72H6" />
    <Line w={4} d="M-4 36V46M-4 88V98M-4 136V146M4 148V156M14 180H24" />
    <Line c={Y} w={4} d={`M.5 0V${foot + 3}M-8 70H10M-8 118H10M-2 ${foot + 4}H32`} />
    <Line c={G} d="M-18 92.500H-8L0 98" />
  </g>
);

const SystemSheet = () => (
  <svg x="446" y="146" width="250" height="180" viewBox="0 0 750 540" overflow="visible">
    <Line d="M13.500 18V520.500H727.500V15M43.500 28.500H715.500V508.500H43.500z" />
    <Line d="M463.500 508V478.500H715M463 493.500H583M487.500 478V508M583.500 478V508M595.500 478V508M655.500 478V508M655 487.500H715M679.500 478V508M655 499.500H715" />
    <Line w={6} d="M468 486H480M468 502H480M498 491H546M500 503H546M606 498H634M588 486V502M660 494H672M690 490H700M684 504H696" />
    <RiserBlock y={0} c={G} />
    <Line c={G} w={4} d="M331 226H438M360 195H370L378 206H386V216H376M376 206V226" />
    <Line w={5} d="M384 206V216M350 231H358M418 229V239M416 231H426" />
    <Stack x={532} y={52} />
    <Stack x={571} y={52} />
    <Stack x={619} y={52} />
    <Stack x={658} y={52} />
    <Line c={G} w={4} d="M298 271H348M573 268H624M318 485H369" />
    <Line w={5} d="M303 268H334M578 265H606M324 481H350" />
    <RiserBlock y={228} c={B} />
    <Line c={C} w={4} d="M112 397V405H482V400H376M112 397H298M336 400V448H362" />
    <Line c={B} w={4} d="M331 440V454H362" />
    <Line c={G} d="M336 427H358" />
    <Line w={6} d="M346 450V470M342 466H354M376 411H384M480 399H510M342 436H350" />
    <Stack x={556} y={280} />
    <Stack x={592} y={280} />
    <AxisMark x={197} y={363} />
  </svg>
);

/* ---------- panels ---------- */

const pages = ["工程设置", "绘图输入", "表格输入", "集中套用做法", "报表预览"];

const plumbing = [
  { icon: "basin", text: "卫生器具(水)(W)", selected: true },
  { icon: "device", text: "设备(水)(S)" },
  { icon: "pipe", text: "管道(水)(G)" },
  { icon: "valve", text: "阀门法兰(水)(F)" },
  { icon: "fitting", text: "管道附件(水)(A)" },
  { icon: "elbow", text: "通头管件(水)(J)" },
  { icon: "pipe", text: "零星构件(水)(K)" },
];

const snaps = [
  { icon: "crossPoint", text: "交点" },
  { icon: "perpendicular", text: "垂点", on: true },
  { icon: "midpoint", text: "中点", on: true },
  { icon: "vertex", text: "顶点", on: true },
  { icon: "coord", text: "坐标" },
];

const layers = ["已提取的CAD图层", "CAD原始图层"];

const Slant = ({ first }) => (
  <svg width="15" height="8" viewBox="0 0 15 8" aria-hidden="true">
    <path d={first ? "M0 5L15 1V8H0z" : "M0 0H15V8H0z"} fill="#fff" />
    <path d={first ? "M0 5L15 1" : "M0 2L15 6M0 6L8 4"} stroke="#777" fill="none" />
  </svg>
);

const App = () => (
  <Window>
    <GlobalStyle />
    <TitleBar>
      <AppButton aria-label="应用程序菜单">
        <svg width="38" height="38" viewBox="0 0 38 38">
          <defs>
            <linearGradient id="orb" x1="0" y1="0" x2="0" y2="1">
              <stop offset="0" stopColor="#fff" />
              <stop offset=".5" stopColor="#b9c3cf" />
              <stop offset="1" stopColor="#f4f9ff" />
            </linearGradient>
          </defs>
          <circle cx="19" cy="19" r="18" fill="url(#orb)" stroke="#77818d" />
          <rect x="7" y="7" width="24" height="24" rx="4" fill="#2b87dc" />
          <path d="M12.500 28L18 11h2l5.500 17M14.500 22h9" stroke="#fff" strokeWidth="3" fill="none" />
        </svg>
      </AppButton>
      <QuickSide>
        <QuickBar>
          <Icon name="newFile" />
          <Icon name="open" />
          <Icon name="save" />
          <Icon name="letterDown" />
          <Icon name="pictureDown" />
          <QuickGroup>
            <Icon name="undo" />
            <Arrow $gap={4} $color="#d7dfe8" />
          </QuickGroup>
          <QuickGroup>
            <Icon name="redo" />
            <Arrow $gap={4} $color="#d7dfe8" />
          </QuickGroup>
          <QuickGroup>
            <Icon name="switchWindow" />
            <Arrow $gap={4} $color="#35598f" />
          </QuickGroup>
          <Icon name="zoomWindow" />
        </QuickBar>
        <QuickMore aria-label="自定义快速访问工具栏">
          <svg width="7" height="7" viewBox="0 0 7 7">
            <path d="M0 .5h7M0 3h7L3.500 6.500z" fill="#1d2f5c" stroke="#1d2f5c" />
          </svg>
        </QuickMore>
      </QuickSide>
      <Title>C:\Users\Administrator\Desktop\广联达车队.GQI3 - 广联达BIM安装算量软件GQI2015</Title>
      <WindowButtons>
        <WindowButton aria-label="最小化">
          <svg width="13" height="12" viewBox="0 0 13 12">
            <rect x="1" y="6.500" width="11" height="4" fill="#fff" stroke="#4a535c" />
          </svg>
        </WindowButton>
        <WindowButton aria-label="还原">
          <svg width="13" height="13" viewBox="0 0 13 13">
            <path d="M4 1h8v7h-2M1.500 4h7.500v7.500H1.500zM4 6.500h2.500V9H4z" fill="none" stroke="#343c44" strokeWidth="3" />
            <path d="M4 1h8v7h-2M2 4h7v7H2zM5 7h1v1H5z" fill="none" stroke="#fff" strokeWidth="1.500" />
          </svg>
        </WindowButton>
        <WindowButton $close aria-label="关闭">
          <svg width="14" height="12" viewBox="0 0 14 12">
            <path d="M3 1l8 9M11 1l-8 9" stroke="#5c1a10" strokeWidth="4" />
            <path d="M3 1l8 9M11 1l-8 9" stroke="#fff" strokeWidth="2.500" />
          </svg>
        </WindowButton>
      </WindowButtons>
    </TitleBar>

    <TabRow>
      <RibbonTab $active>常用</RibbonTab>
      <RibbonTab>工具</RibbonTab>
      <RibbonTab>视图</RibbonTab>
      <RibbonTab>帮助</RibbonTab>
      <Mascot aria-label="在线服务">
        <svg width="16" height="16" viewBox="0 0 16 16">
          <path d="M2 3l3-2h6l3 2 1 1v4l-1 1-1 5-3 1-2-1-2 1-3-1-1-5-1-1V4z" fill="#149be8" stroke="#e8f5ff" />
          <circle cx="5.500" cy="6" r="1.500" fill="#fff" />
          <circle cx="10.500" cy="6" r="1.500" fill="#fff" />
          <path d="M5 9q3 3 6 0" stroke="#fff" fill="none" />
          <path d="M5.500 5.500v1M10.500 5.500v1" stroke="#123" />
        </svg>
      </Mascot>
    </TabRow>

    <RibbonBody>
      {groups.map((group) => (
        <RibbonGroup key={group.caption} group={group} />
      ))}
      {collapsedGroups.map((item) => (
        <Group key={item.text} $width={item.width}>
          <GroupBody>
            <CollapsedButton>
              <IconFrame>
                <Icon name={item.icon} />
              </IconFrame>
              {item.text}
              <Arrow $below />
            </CollapsedButton>
          </GroupBody>
        </Group>
      ))}
    </RibbonBody>

    <Work>
      <PageTabs>
        <Slant first />
        {pages.map((page, i) => (
          <React.Fragment key={page}>
            {i > 0 && <Slant />}
            <PageTab $active={i === 1}>{page}</PageTab>
          </React.Fragment>
        ))}
        <TabsEnd />
      </PageTabs>

      <Dock $width={389}>
        <DockHeader>
          <DockTitle>定义</DockTitle>
          <IconButton aria-label="固定">
            <Icon name="pin" size={14} />
          </IconButton>
          <IconButton aria-label="关闭">
            <Icon name="close" size={14} />
          </IconButton>
        </DockHeader>
        <Panes>
          <Pane $flex="0 0 156px">
            <FloorSelect aria-label="楼层">
              <option>首层</option>
            </FloorSelect>
            <TreeTools>
              <TreeTool aria-label="全部展开">
                <Icon name="plusPlus" size={14} />
              </TreeTool>
              <TreeTool aria-label="全部折叠">
                <Icon name="minusMinus" size={14} />
              </TreeTool>
              <TreeTool>编辑专业</TreeTool>
            </TreeTools>
            <Tree>
              <TreeRow>
                <Twisty viewBox="0 0 10 10">
                  <path d="M8 2v6H2z" fill="#333" />
                </Twisty>
                <TreeLabel>
                  <Icon name="folderOpen" />
                  给排水
                </TreeLabel>
              </TreeRow>
              {plumbing.map((item) => (
                <TreeRow key={item.text} $child>
                  <TreeLabel $selected={item.selected}>
                    <Icon name={item.icon} />
                    {item.text}
                  </TreeLabel>
                </TreeRow>
              ))}
              {["建筑结构", "自定义"].map((name) => (
                <TreeRow key={name}>
                  <Twisty viewBox="0 0 10 10">
                    <path d="M3.500 1.500v7L7.500 5z" fill="#fff" stroke="#999" />
                  </Twisty>
                  <TreeLabel>
                    <Icon name="folder" />
                    {name}
                  </TreeLabel>
                </TreeRow>
              ))}
            </Tree>
          </Pane>
          <Pane>
            <ComponentTools>
              <IconButton $gap={4}>
                <Icon name="newItem" />
                新建
                <Arrow $color="#000" />
              </IconButton>
              <IconButton aria-label="删除">
                <Icon name="cross" />
              </IconButton>
              <IconButton aria-label="复制">
                <Icon name="copyGray" />
              </IconButton>
              <IconButton $gap={2} aria-label="排序">
                <Icon name="sort" />
                <Arrow $color="#000" />
              </IconButton>
              <IconButton $gap={4} aria-label="过滤">
                <Icon name="filter" />
                <Arrow $color="#000" />
              </IconButton>
              <IconButton $gap={4} aria-label="查找">
                <Icon name="binoculars" />
                <Arrow $color="#000" />
              </IconButton>
              <IconButton aria-label="更多">
                <svg width="9" height="18" viewBox="0 0 9 18">
                  <path d="M1 2l3 3-3 3M5 2l3 3-3 3" stroke="#000" strokeWidth="1.500" fill="none" />
                  <path d="M2 13h6l-3 3z" />
                </svg>
              </IconButton>
            </ComponentTools>
            <ComponentRow>
              <span>·</span>
              <IconButton $gap={5}>
                <Icon name="basin" />
                卫生器具(水)
              </IconButton>
            </ComponentRow>
          </Pane>
        </Panes>
      </Dock>

      <Stage>
        <Viewport>
          <svg width="100%" height="100%" viewBox="0 0 769 510" aria-label="CAD图纸">
            <FloorPlan />
            <DetailSheet />
            <SystemSheet />
          </svg>
        </Viewport>
        <StatusBar>
          <StatusGroup>
            <StatusButton>正交</StatusButton>
            <StatusButton $on>对象捕捉</StatusButton>
            <StatusButton>动态输入</StatusButton>
            <StatusMore aria-label="更多">»</StatusMore>
          </StatusGroup>
          <StatusGroup>
            {snaps.map((snap) => (
              <StatusButton key={snap.text} $on={snap.on} $snap>
                <Icon name={snap.icon} />
                {snap.text}
              </StatusButton>
            ))}
          </StatusGroup>
        </StatusBar>
      </Stage>

      <Dock $width={158} $right>
        <LayerHeader>
          <DockTitle>CAD图层显示</DockTitle>
          <IconButton aria-label="固定">
            <Icon name="pin" size={14} />
          </IconButton>
        </LayerHeader>
        <LayerPane>
          <ul>
            {layers.map((layer) => (
              <LayerRow key={layer}>
                <Twisty viewBox="0 0 10 10">
                  <path d="M3.500 1.500v7L7 5z" fill="#fff" stroke="#999" />
                </Twisty>
                <LayerDots />
                <LayerLabel>
                  <LayerCheck type="checkbox" defaultChecked />
                  <svg width="10" height="10" viewBox="0 0 10 10">
                    <path d="M1.500 4.500L4 8l4-7" stroke="#3b4f9a" strokeWidth="2" fill="none" />
                  </svg>
                  {layer}
                </LayerLabel>
              </LayerRow>
            ))}
          </ul>
        </LayerPane>
      </Dock>
    </Work>
  </Window>
);

export default App;
